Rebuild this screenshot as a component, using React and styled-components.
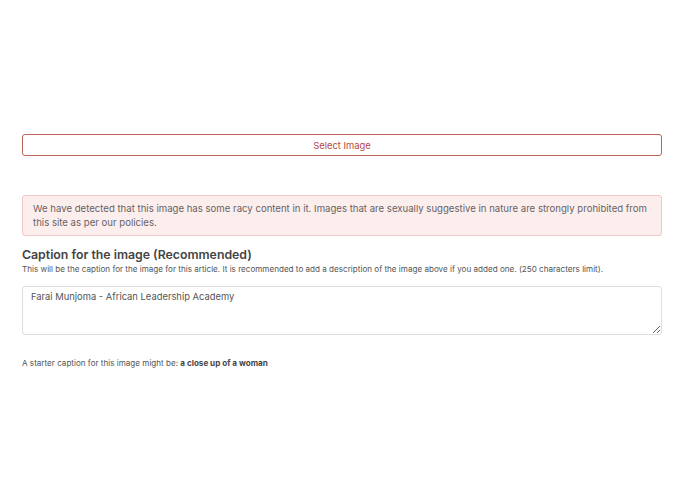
import React from 'react';
import styled, { createGlobalStyle } from 'styled-components';

const Global = createGlobalStyle`
  html, body {
    margin: 0;
    padding: 0;
    background: #fff;
    font-family: Inter, "Noto Sans", sans-serif;
  }
`;

const Page = styled.div`
  width: 640px;
  padding: 134px 0 0 22px;
  display: flex;
  flex-direction: column;
`;

const SelectButton = styled.button`
  height: 22px;
  width: 100%;
  border: 1px solid #c0625c;
  border-radius: 3px;
  background: #fff;
  color: #b5473f;
  font-family: inherit;
  font-size: 9.4px;
  padding: 0;
  margin-bottom: 39px;
`;

const Alert = styled.div`
  background: #fdeeee;
  border: 1px solid #f3c6c6;
  border-radius: 3px;
  color: #676262;
  font-size: 9.6px;
  line-height: 14px;
  padding: 6px 4px 5px 10px;
  margin-bottom: 10px;
`;

const Heading = styled.h2`
  margin: 0;
  font-size: 12.3px;
  font-weight: 600;
  color: #444;
  line-height: 17px;
`;

const Hint = styled.p`
  margin: 0 0 ${(p) => p.$gap || 0}px;
  font-size: 8.1px;
  line-height: 12px;
  color: #555;

  & b {
    font-weight: 700;
    color: #444;
  }
`;

const Caption = styled.textarea`
  box-sizing: border-box;
  width: 100%;
  height: 49px;
  border: 1px solid #ddd;
  border-radius: 3px;
  padding: 3px 8px;
  font-family: inherit;
  font-size: 9.4px;
  line-height: 14px;
  color: #555;
  resize: vertical;
  margin: 0 0 22px;
  display: block;
`;

export default function App() {
  return (
    <>
      <Global />
      <Page>
        <SelectButton>Select Image</SelectButton>
        <Alert>
          We have detected that this image has some racy content in it. Images that are sexually
          suggestive in nature are strongly prohibited from this site as per our policies.
        </Alert>
        <Heading>Caption for the image (Recommended)</Heading>
        <Hint $gap={11}>
          This will be the caption for the image for this article. It is recommended to add a
          description of the image above if you added one. (250 characters limit).
        </Hint>
        <Caption defaultValue="Farai Munjoma - African Leadership Academy" />
        <Hint>
          A starter caption for this image might be: <b>a close up of a woman</b>
        </Hint>
      </Page>
    </>
  );
}
